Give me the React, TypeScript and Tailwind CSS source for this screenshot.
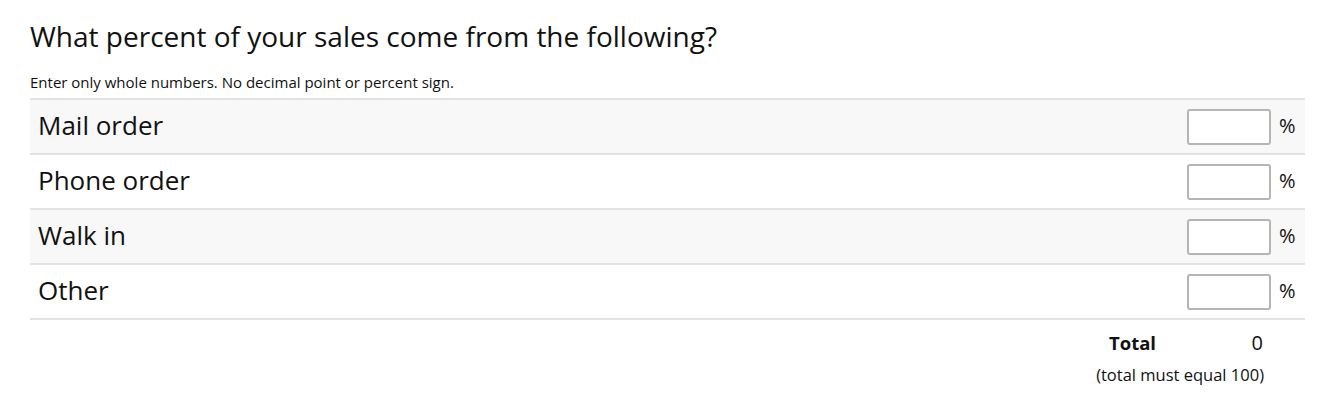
import React, { useState } from 'react';

const rows = ['Mail order', 'Phone order', 'Walk in', 'Other'];

export default function App() {
  const [values, setValues] = useState<string[]>(['', '', '', '']);

  const total = values.reduce((sum, v) => sum + (parseInt(v, 10) || 0), 0);

  return (
    <div className="bg-white min-h-screen px-[30px] pt-[18px] text-[#111] font-['Open_Sans',sans-serif]">
      <h1 className="text-[28px] leading-[36px] font-normal">
        What percent of your sales come from the following?
      </h1>
      <p className="text-[15px] leading-[18px] mt-[19px] mb-[7px]">
        Enter only whole numbers. No decimal point or percent sign.
      </p>

      <div className="w-[1275px] border-t-2 border-[#e3e3e3]">
        {rows.map((label, i) => (
          <div
            key={label}
            className={`flex items-center h-[55px] border-b-2 border-[#e3e3e3] pl-[8px] pr-[9px] ${
              i % 2 === 0 ? 'bg-[#f8f8f8]' : 'bg-white'
            }`}
          >
            <span className="flex-1 text-[26px] leading-none pb-[3px]">{label}</span>
            <input
              type="text"
              value={values[i]}
              onChange={(e) => {
                const next = [...values];
                next[i] = e.target.value;
                setValues(next);
              }}
              className="w-[84px] h-[36px] bg-white border-2 border-[#b5b5b5] rounded-[3px] px-2 text-[16px] outline-none"
            />
            <span className="w-[25px] pl-[8px] text-[20px] pb-[2px]">%</span>
          </div>
        ))}

        <div className="flex items-center justify-end h-[44px] pt-[2px] pr-[34px]">
          <span className="text-[18.5px] font-bold mr-[31px]">Total</span>
          <span className="w-[84px] text-right pr-[8px] text-[20px]">{total}</span>
        </div>
        <div className="text-right pr-[41px] text-[16.5px] leading-[22px] mt-[0px]">
          (total must equal 100)
        </div>
      </div>
    </div>
  );
}
